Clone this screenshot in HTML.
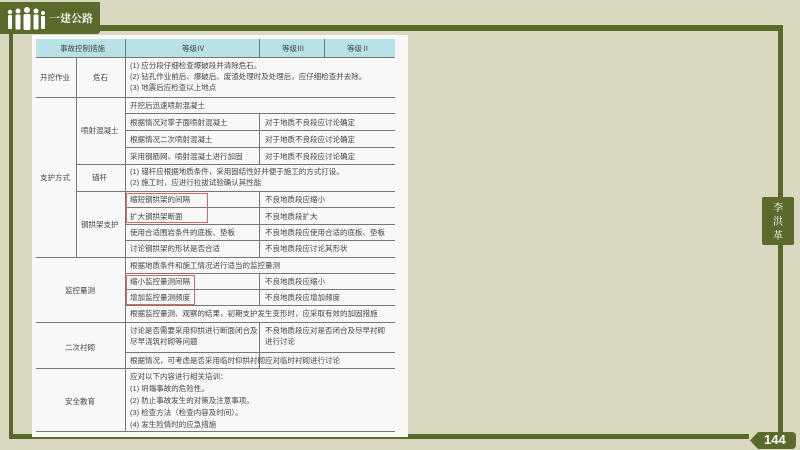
<!DOCTYPE html><html><head><meta charset="utf-8"><style>
body{margin:0;width:800px;height:450px;background:#dbd8c2;position:relative;overflow:hidden;font-family:"Liberation Sans","Noto Sans CJK SC",sans-serif}
.a{position:absolute}
.g{background:#596a2b}
.t{position:absolute;font-size:7.5px;color:#444;line-height:11px;white-space:nowrap}
.h{position:absolute;height:1px;background:#777}
.v{position:absolute;width:1px;background:#777}
</style></head><body>
<div class="a g" style="left:100px;top:25px;width:683px;height:6px"></div>
<div class="a g" style="left:778px;top:25px;width:5px;height:410px"></div>
<div class="a g" style="left:9px;top:434px;width:740px;height:5px"></div>
<div class="a g" style="left:9px;top:30px;width:4px;height:408px"></div>
<div class="a g" style="left:0;top:2px;width:100px;height:32px;border-radius:0 0 3px 0"></div>
<svg class="a" style="left:6px;top:6px" width="40" height="24" viewBox="0 0 40 24" fill="#fff">
<circle cx="4" cy="6" r="2.2"/><rect x="2" y="9" width="4" height="14" rx="1"/>
<circle cx="12" cy="5" r="2.5"/><rect x="9.5" y="8.5" width="5" height="15" rx="1"/>
<circle cx="21" cy="4" r="3"/><rect x="17.5" y="8" width="7" height="16" rx="1.5"/>
<circle cx="30" cy="5" r="2.5"/><rect x="27.5" y="8.5" width="5" height="15" rx="1"/>
<circle cx="37" cy="7" r="2"/><rect x="35" y="10" width="4" height="13" rx="1"/>
</svg>
<div class="a" style="left:49px;top:10px;color:#fff;font-size:11px;font-weight:bold;font-family:'Noto Serif CJK SC',serif">一建公路</div>
<div class="a g" style="left:762px;top:197px;width:32px;height:48px;border-radius:2px"></div>
<div class="a" style="left:762px;top:200px;width:32px;color:#fff;font-size:10px;line-height:14px;text-align:center;font-family:'Noto Serif CJK SC',serif">李<br>洪<br>革</div>
<div class="a g" style="left:750px;top:432px;width:46px;height:17px;clip-path:polygon(8px 0,100% 0,100% 100%,8px 100%,0 50%);border-radius:0 4px 4px 0"></div>
<div class="a" style="left:764px;top:432px;color:#fff;font-size:13px;font-weight:bold">144</div>
<div class="a" style="left:32px;top:35px;width:376px;height:402px;background:#f8f8f8"></div>
<div class="a" style="left:36px;top:39px;width:359px;height:18px;background:#b8e2e6"></div>
<div class="t" style="left:60px;top:43px">事故控制措施</div><div class="t" style="left:182px;top:43px">等级Ⅳ</div><div class="t" style="left:282px;top:43px">等级Ⅲ</div><div class="t" style="left:347px;top:43px">等级Ⅱ</div>
<div class="h" style="left:36px;top:57px;width:359px"></div>
<div class="h" style="left:36px;top:97px;width:359px"></div>
<div class="h" style="left:125px;top:113px;width:270px"></div>
<div class="h" style="left:125px;top:130px;width:270px"></div>
<div class="h" style="left:125px;top:147px;width:270px"></div>
<div class="h" style="left:76px;top:164px;width:319px"></div>
<div class="h" style="left:76px;top:191px;width:319px"></div>
<div class="h" style="left:125px;top:207px;width:270px"></div>
<div class="h" style="left:125px;top:224px;width:270px"></div>
<div class="h" style="left:125px;top:240px;width:270px"></div>
<div class="h" style="left:36px;top:257px;width:359px"></div>
<div class="h" style="left:125px;top:273px;width:270px"></div>
<div class="h" style="left:125px;top:289px;width:270px"></div>
<div class="h" style="left:125px;top:305px;width:270px"></div>
<div class="h" style="left:36px;top:322px;width:359px"></div>
<div class="h" style="left:125px;top:352px;width:270px"></div>
<div class="h" style="left:36px;top:368px;width:359px"></div>
<div class="h" style="left:36px;top:431px;width:359px"></div>
<div class="v" style="left:125px;top:39px;height:392px"></div>
<div class="v" style="left:76px;top:57px;height:40px"></div>
<div class="v" style="left:76px;top:97px;height:160px"></div>
<div class="v" style="left:259px;top:39px;height:18px"></div>
<div class="v" style="left:324px;top:39px;height:18px"></div>
<div class="v" style="left:259px;top:113px;height:51px"></div>
<div class="v" style="left:259px;top:191px;height:66px"></div>
<div class="v" style="left:259px;top:273px;height:32px"></div>
<div class="v" style="left:259px;top:322px;height:46px"></div>
<div class="t" style="left:40px;top:72px">开挖作业</div><div class="t" style="left:93px;top:72px">危石</div>
<div class="t" style="left:130px;top:60px">(1) 应分段仔细检查爆破段并清除危石。<br>(2) 钻孔作业前后、爆破后、废渣处理时及处理后，应仔细检查并去除。<br>(3) 地震后应检查以上地点</div>
<div class="t" style="left:130px;top:100px">开挖后迅速喷射混凝土</div>
<div class="t" style="left:81px;top:125px">喷射混凝土</div>
<div class="t" style="left:130px;top:117px">根据情况对掌子面喷射混凝土</div><div class="t" style="left:265px;top:117px">对于地质不良段应讨论确定</div>
<div class="t" style="left:130px;top:134px">根据情况二次喷射混凝土</div><div class="t" style="left:265px;top:134px">对于地质不良段应讨论确定</div>
<div class="t" style="left:130px;top:151px">采用钢筋网、喷射混凝土进行加固</div><div class="t" style="left:265px;top:151px">对于地质不良段应讨论确定</div>
<div class="t" style="left:40px;top:172px">支护方式</div><div class="t" style="left:92px;top:172px">锚杆</div>
<div class="t" style="left:130px;top:166px">(1) 锚杆应根据地质条件，采用固结性好并便于施工的方式打设。<br>(2) 施工时，应进行拉拔试验确认其性能</div>
<div class="t" style="left:81px;top:219px">钢拱架支护</div>
<div class="t" style="left:130px;top:194px">缩短钢拱架的间隔</div><div class="t" style="left:265px;top:194px">不良地质段应缩小</div>
<div class="t" style="left:130px;top:211px">扩大钢拱架断面</div><div class="t" style="left:265px;top:211px">不良地质段扩大</div>
<div class="t" style="left:130px;top:227px">使用合适围岩条件的底板、垫板</div><div class="t" style="left:265px;top:227px">不良地质段应使用合适的底板、垫板</div>
<div class="t" style="left:130px;top:243px">讨论钢拱架的形状是否合适</div><div class="t" style="left:265px;top:243px">不良地质段应讨论其形状</div>
<div class="a" style="left:126px;top:193px;width:80px;height:28px;border:1px solid #d66"></div>
<div class="t" style="left:65px;top:285px">监控量测</div>
<div class="t" style="left:130px;top:260px">根据地质条件和施工情况进行适当的监控量测</div>
<div class="t" style="left:130px;top:276px">缩小监控量测间隔</div><div class="t" style="left:265px;top:276px">不良地质段应缩小</div>
<div class="t" style="left:130px;top:292px">增加监控量测频度</div><div class="t" style="left:265px;top:292px">不良地质段应增加频度</div>
<div class="a" style="left:126px;top:275px;width:67px;height:28px;border:1px solid #d66"></div>
<div class="t" style="left:130px;top:308px">根据监控量测、观察的结果，初期支护发生变形时，应采取有效的加固措施</div>
<div class="t" style="left:65px;top:342px">二次衬砌</div>
<div class="t" style="left:130px;top:325px">讨论是否需要采用仰拱进行断面闭合及<br>尽早浇筑衬砌等问题</div><div class="t" style="left:265px;top:325px">不良地质段应对是否闭合及尽早衬砌<br>进行讨论</div>
<div class="t" style="left:130px;top:355px">根据情况，可考虑是否采用临时仰拱衬砌</div><div class="t" style="left:265px;top:355px">应对临时衬砌进行讨论</div>
<div class="t" style="left:65px;top:396px">安全教育</div>
<div class="t" style="left:130px;top:371px;line-height:12px">应对以下内容进行相关培训：<br>(1) 坍塌事故的危险性。<br>(2) 防止事故发生的对策及注意事项。<br>(3) 检查方法（检查内容及时间）。<br>(4) 发生险情时的应急措施</div>
</body></html>
